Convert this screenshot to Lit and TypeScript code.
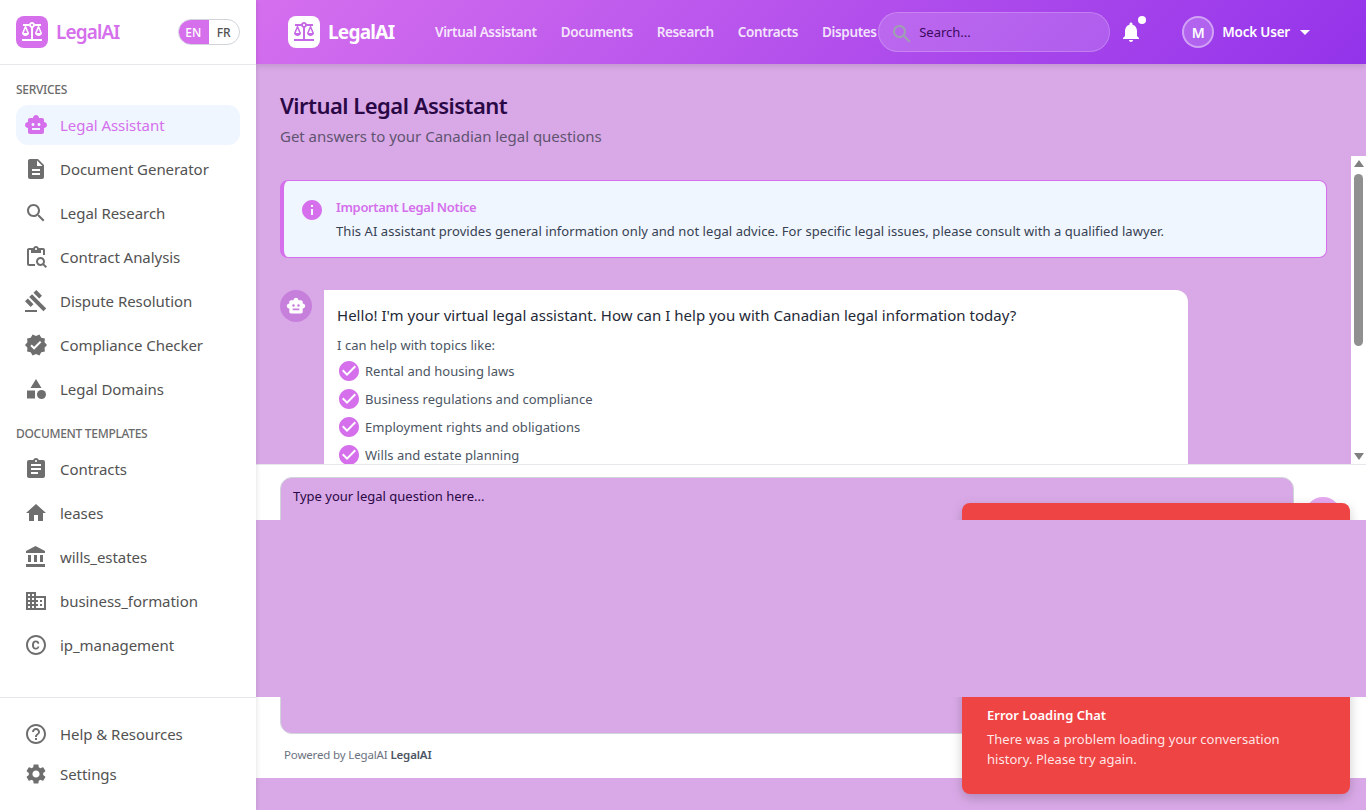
import { LitElement, html, css, svg } from "lit";
import { customElement } from "lit/decorators.js";

const P: Record<string, any> = {
  toy: svg`<path d="M20 9V7c0-1.1-.9-2-2-2h-3c0-1.66-1.34-3-3-3S9 3.34 9 5H6c-1.1 0-2 .9-2 2v2c-1.66 0-3 1.34-3 3s1.34 3 3 3v4c0 1.1.9 2 2 2h12c1.1 0 2-.9 2-2v-4c1.66 0 3-1.34 3-3s-1.34-3-3-3zM7.5 11.5c0-.83.67-1.5 1.5-1.5s1.5.67 1.5 1.5S9.83 13 9 13s-1.5-.67-1.5-1.5zM16 17H8v-2h8v2zm-1-4c-.83 0-1.5-.67-1.5-1.5S14.17 10 15 10s1.5.67 1.5 1.5S15.83 13 15 13z"/>`,
  doc: svg`<path d="M14 2H6c-1.1 0-1.99.9-1.99 2L4 20c0 1.1.89 2 1.99 2H18c1.1 0 2-.9 2-2V8l-6-6zm2 16H8v-2h8v2zm0-4H8v-2h8v2zm-3-5V3.5L18.5 9H13z"/>`,
  search: svg`<path d="M15.5 14h-.79l-.28-.27C15.41 12.59 16 11.11 16 9.5 16 5.91 13.09 3 9.5 3S3 5.91 3 9.5 5.91 16 9.5 16c1.61 0 3.09-.59 4.23-1.57l.27.28v.79l5 4.99L20.49 19l-4.99-5zm-6 0C7.01 14 5 11.99 5 9.5S7.01 5 9.5 5 14 7.01 14 9.5 11.99 14 9.5 14z"/>`,
  paste: svg`<path d="M5 5h2v3h10V5h2v5h2V5c0-1.1-.9-2-2-2h-4.18C14.4 1.84 13.3 1 12 1s-2.4.84-2.82 2H5c-1.1 0-2 .9-2 2v14c0 1.1.9 2 2 2h6v-2H5V5zm7-2c.55 0 1 .45 1 1s-.45 1-1 1-1-.45-1-1 .45-1 1-1z"/><path d="M20.3 18.9c.4-.7.7-1.5.7-2.4 0-2.5-2-4.5-4.5-4.5S12 14 12 16.5s2 4.5 4.5 4.5c.9 0 1.7-.3 2.4-.7l2.7 2.7 1.4-1.4-2.7-2.7zm-3.8.1c-1.4 0-2.5-1.1-2.5-2.5s1.1-2.5 2.5-2.5 2.5 1.1 2.5 2.5-1.1 2.5-2.5 2.5z"/>`,
  gavel: svg`<path d="M1 21h12v2H1v-2zM5.24 8.07l2.83-2.83 14.14 14.14-2.83 2.83L5.24 8.07zM12.32 1l5.66 5.66-2.83 2.83-5.66-5.66L12.32 1zM3.83 9.48l5.66 5.66-2.83 2.83L1 12.31l2.83-2.83z"/>`,
  verified: svg`<path d="M23 12l-2.44-2.79.34-3.69-3.61-.82-1.89-3.2L12 2.96 8.6 1.5 6.71 4.69 3.1 5.5l.34 3.7L1 12l2.44 2.79-.34 3.7 3.61.82L8.6 22.5l3.4-1.47 3.4 1.46 1.89-3.19 3.61-.82-.34-3.69L23 12zm-12.91 4.72l-3.8-3.81 1.48-1.48 2.32 2.33 5.85-5.87 1.48 1.48-7.33 7.35z"/>`,
  category: svg`<path d="M12 2l-5.5 9h11z"/><circle cx="17.5" cy="17.5" r="4.5"/><path d="M3 13.5h8v8H3z"/>`,
  assignment: svg`<path d="M19 3h-4.18C14.4 1.84 13.3 1 12 1c-1.3 0-2.4.84-2.82 2H5c-1.1 0-2 .9-2 2v14c0 1.1.9 2 2 2h14c1.1 0 2-.9 2-2V5c0-1.1-.9-2-2-2zm-7 0c.55 0 1 .45 1 1s-.45 1-1 1-1-.45-1-1 .45-1 1-1zm2 14H7v-2h7v2zm3-4H7v-2h10v2zm0-4H7V7h10v2z"/>`,
  home: svg`<path d="M10 20v-6h4v6h5v-8h3L12 3 2 12h3v8z"/>`,
  bank: svg`<path d="M4 10v7h3v-7H4zm6 0v7h3v-7h-3zM2 22h19v-3H2v3zm14-12v7h3v-7h-3zm-4.5-9L2 6v2h19V6l-9.5-5z"/>`,
  domain: svg`<path d="M12 7V3H2v18h20V7H12zM6 19H4v-2h2v2zm0-4H4v-2h2v2zm0-4H4V9h2v2zm0-4H4V5h2v2zm4 12H8v-2h2v2zm0-4H8v-2h2v2zm0-4H8V9h2v2zm0-4H8V5h2v2zm10 12h-8v-2h2v-2h-2v-2h2v-2h-2V9h8v10zm-2-8h-2v2h2v-2zm0 4h-2v2h2v-2z"/>`,
  copyright: svg`<path d="M11.88 9.14c1.28.06 1.61 1.15 1.63 1.66h1.79c-.08-1.98-1.49-3.19-3.45-3.19C9.64 7.61 8 9 8 12.14c0 1.94.93 4.24 3.84 4.24 2.22 0 3.41-1.65 3.44-2.95h-1.79c-.03.59-.45 1.38-1.63 1.44-1.32-.04-1.86-1.07-1.86-2.73 0-2.87 1.27-2.98 1.88-3zM12 2C6.48 2 2 6.48 2 12s4.48 10 10 10 10-4.48 10-10S17.52 2 12 2zm0 18c-4.41 0-8-3.59-8-8s3.59-8 8-8 8 3.59 8 8-3.59 8-8 8z"/>`,
  help: svg`<path d="M11 18h2v-2h-2v2zm1-16C6.48 2 2 6.48 2 12s4.48 10 10 10 10-4.48 10-10S17.52 2 12 2zm0 18c-4.41 0-8-3.59-8-8s3.59-8 8-8 8 3.59 8 8-3.59 8-8 8zm0-14c-2.21 0-4 1.79-4 4h2c0-1.1.9-2 2-2s2 .9 2 2c0 2-3 1.75-3 5h2c0-2.25 3-2.5 3-5 0-2.21-1.79-4-4-4z"/>`,
  settings: svg`<path d="M19.14 12.94c.04-.3.06-.61.06-.94 0-.32-.02-.64-.07-.94l2.03-1.58c.18-.14.23-.41.12-.61l-1.92-3.32c-.12-.22-.37-.29-.59-.22l-2.39.96c-.5-.38-1.03-.7-1.62-.94l-.36-2.54c-.04-.24-.24-.41-.48-.41h-3.84c-.24 0-.43.17-.47.41l-.36 2.54c-.59.24-1.13.57-1.62.94l-2.39-.96c-.22-.08-.47 0-.59.22L2.74 8.87c-.12.21-.08.47.12.61l2.03 1.58c-.05.3-.09.63-.09.94s.02.64.07.94l-2.03 1.58c-.18.14-.23.41-.12.61l1.92 3.32c.12.22.37.29.59.22l2.39-.96c.5.38 1.03.7 1.62.94l.36 2.54c.05.24.24.41.48.41h3.84c.24 0 .44-.17.47-.41l.36-2.54c.59-.24 1.13-.56 1.62-.94l2.39.96c.22.08.47 0 .59-.22l1.92-3.32c.12-.22.07-.47-.12-.61l-2.01-1.58zM12 15.6c-1.98 0-3.6-1.62-3.6-3.6s1.62-3.6 3.6-3.6 3.6 1.62 3.6 3.6-1.62 3.6-3.6 3.6z"/>`,
  balance: svg`<path d="M13 7.83c.85-.3 1.53-.98 1.83-1.83H18l-3 7c0 1.66 1.57 3 3.5 3s3.5-1.34 3.5-3l-3-7h2V4h-6.17c-.41-1.17-1.52-2-2.83-2s-2.42.83-2.83 2H3v2h2l-3 7c0 1.66 1.57 3 3.5 3S9 14.66 9 13L6 6h3.17c.3.85.98 1.53 1.83 1.83V19H2v2h20v-2h-9V7.83zM20.37 13h-3.74l1.87-4.36L20.37 13zm-13 0H3.63L5.5 8.64 7.37 13zM12 6c-.55 0-1-.45-1-1 0-.55.45-1 1-1s1 .45 1 1c0 .55-.45 1-1 1z"/>`,
  info: svg`<path d="M12 2C6.48 2 2 6.48 2 12s4.48 10 10 10 10-4.48 10-10S17.52 2 12 2zm1 15h-2v-6h2v6zm0-8h-2V7h2v2z"/>`,
  check: svg`<path d="M12 2C6.47 2 2 6.47 2 12s4.47 10 10 10 10-4.47 10-10S17.53 2 12 2zm-2 15l-5-5 1.41-1.41L10 14.17l7.59-7.59L19 8l-9 9z"/>`,
  bell: svg`<path d="M12 22c1.1 0 2-.9 2-2h-4c0 1.1.89 2 2 2zm6-6v-5c0-3.07-1.64-5.64-4.5-6.32V4c0-.83-.67-1.5-1.5-1.5s-1.5.67-1.5 1.5v.68C7.63 5.36 6 7.92 6 11v5l-2 2v1h16v-1l-2-2z"/>`,
  caret: svg`<path d="M7 10l5 5 5-5z"/>`,
};
const icon = (n: string, cls = "") => html`<svg class="ic ${cls}" viewBox="0 0 24 24" fill="currentColor">${P[n]}</svg>`;

const services = [["toy", "Legal Assistant"], ["doc", "Document Generator"], ["search", "Legal Research"], ["paste", "Contract Analysis"], ["gavel", "Dispute Resolution"], ["verified", "Compliance Checker"], ["category", "Legal Domains"]];
const templates = [["assignment", "Contracts"], ["home", "leases"], ["bank", "wills_estates"], ["domain", "business_formation"], ["copyright", "ip_management"]];
const footer = [["help", "Help & Resources"], ["settings", "Settings"]];
const topNav = ["Virtual Assistant", "Documents", "Research", "Contracts", "Disputes"];
const topics = ["Rental and housing laws", "Business regulations and compliance", "Employment rights and obligations", "Wills and estate planning"];

@customElement("app-root")
export class AppRoot extends LitElement {
  static styles = css`
    :host { display: flex; width: 100%; height: 810px; overflow: hidden; position: relative; background: #d9a9e7; font-family: "Noto Sans", "Open Sans", sans-serif; color: #1f2937; }
    * { box-sizing: border-box; }
    .ic { display: block; width: 24px; height: 24px; flex: none; }
    .side { position: relative; z-index: 3; width: 256px; flex: none; height: 810px; background: #fff; display: flex; flex-direction: column; box-shadow: 1px 0 4px rgba(0,0,0,.1); }
    .brand { height: 65px; flex: none; border-bottom: 1px solid #e5e7eb; padding: 0 16px; display: flex; align-items: center; }
    .logo { width: 32px; height: 32px; border-radius: 8px; background: #d56fec; color: #fff; display: flex; align-items: center; justify-content: center; flex: none; }
    .brandname { margin-left: 8px; font-size: 19px; font-weight: 600; color: #d56fec; letter-spacing: -.88px; flex: 1; }
    .lang { display: flex; width: 62px; height: 26px; border: 1px solid #d1d5db; border-radius: 13px; overflow: hidden; font-size: 12px; font-weight: 500; }
    .lang span { flex: 1; display: flex; align-items: center; justify-content: center; color: #525252; }
    .lang .on { background: #d56fec; color: #fff; margin: -1px 0 -1px -1px; }
    .nav { flex: 1; padding: 17px 16px 0; }
    .sec { height: 16px; margin: 0 0 7px; font-size: 12px; line-height: 16px; font-weight: 500; color: #6b6b6b; letter-spacing: -.3px; }
    .sec.second { margin-top: 17px; }
    .item { height: 40px; margin-bottom: 4px; border-radius: 12px; padding: 0 8px; display: flex; align-items: center; gap: 12px; font-size: 15px; letter-spacing: -.05px; color: #525252; }
    .item .ic { color: #6e6e6e; }
    .item.on { background: #eff6ff; color: #d56fec; }
    .item.on .ic { color: #d56fec; }
    .foot { border-top: 1px solid #e5e7eb; padding: 16px; flex: none; }
    .foot .item { margin: 0; }
    .main { flex: 1; min-width: 0; display: flex; flex-direction: column; position: relative; }
    .top { height: 64px; flex: none; display: flex; align-items: center; padding: 0 49px 0 32px; color: #fff; position: relative; z-index: 1; background: linear-gradient(135deg, #d56fee 0%, #9333ea 100%); box-shadow: 0 2px 6px rgba(0,0,0,.12); }
    .logo.w { background: #fff; color: #c568e6; }
    .tname { margin-left: 8px; font-size: 19px; font-weight: 700; letter-spacing: -.75px; flex: none; width: 67px; }
    .links { flex: 1; min-width: 0; display: flex; gap: 24px; margin-left: 40px; white-space: nowrap; font-size: 13.5px; font-weight: 600; color: rgba(255,255,255,.85); letter-spacing: -.36px; }
    .sbox { width: 232px; height: 40px; flex: none; border-radius: 20px; background: rgba(255,255,255,.15); border: 1px solid rgba(255,255,255,.2); display: flex; align-items: center; padding-left: 11px; gap: 5px; font-size: 13px; color: #3b0a5e; }
    .sbox .ic { color: #9ca3af; margin-top: 4px; }
    .bell { margin-left: 9px; position: relative; width: 24px; height: 24px; flex: none; }
    .dot { position: absolute; top: -4px; right: -3px; width: 8px; height: 8px; border-radius: 50%; background: #fff; }
    .user { margin-left: 39px; display: flex; align-items: center; font-size: 13.5px; font-weight: 600; letter-spacing: -.2px; flex: none; }
    .avatar { width: 32px; height: 32px; border-radius: 50%; background: rgba(255,255,255,.2); border: 2px solid rgba(255,255,255,.4); display: flex; align-items: center; justify-content: center; font-size: 14px; margin-right: 8px; }
    .user .ic { margin-left: 3px; }
    .head { height: 92px; flex: none; padding: 23px 24px 0; }
    h1 { margin: 0 0 1px; font-size: 22px; line-height: 36px; font-weight: 600; color: #2a0845; letter-spacing: -.52px; }
    .sub { margin: 0; font-size: 15px; line-height: 24px; letter-spacing: -.02px; color: #5f5470; }
    .chat { height: 308px; flex: none; display: flex; }
    .scrollarea { flex: 1; min-width: 0; overflow: hidden; padding: 24px 24px 0; }
    .notice { height: 78px; border: 1px solid #d56fec; border-left-width: 4px; border-radius: 8px; background: #eff6ff; padding: 0 16px; display: flex; align-items: center; gap: 12px; margin-bottom: 32px; }
    .notice .ic { color: #d56fec; margin-top: -18px; }
    .ntitle { font-size: 13px; line-height: 20px; font-weight: 600; letter-spacing: -.35px; color: #d56fec; }
    .nbody { font-size: 13px; line-height: 20px; letter-spacing: .06px; color: #374151; margin-top: 4px; }
    .msg { display: flex; gap: 12px; }
    .bot { width: 32px; height: 32px; border-radius: 50%; background: #c77fdc; color: #fff; display: flex; align-items: center; justify-content: center; flex: none; }
    .bot .ic { width: 20px; height: 20px; }
    .bubble { width: 864px; height: 240px; background: #fff; border-radius: 0 12px 12px 12px; padding: 12px 13px; box-shadow: 0 1px 2px rgba(0,0,0,.05); }
    .hello { font-size: 15px; line-height: 26px; letter-spacing: .02px; color: #1f2937; }
    .can { font-size: 13px; line-height: 20px; letter-spacing: .05px; color: #4b5563; margin-top: 7px; }
    .li { display: flex; align-items: center; gap: 4px; height: 24px; margin-top: 4px; font-size: 13px; letter-spacing: .03px; color: #4b5563; }
    .li .ic { color: #d56fec; }
    .sbar { width: 15px; flex: none; background: #fff; position: relative; display: flex; flex-direction: column; align-items: center; justify-content: space-between; padding: 4px 0; }
    .arrow { width: 0; height: 0; border-left: 5px solid transparent; border-right: 5px solid transparent; }
    .arrow.up { border-bottom: 7px solid #808080; }
    .arrow.down { border-top: 7px solid #808080; }
    .thumb { position: absolute; top: 18px; left: 3px; width: 9px; height: 172px; background: #909090; border-radius: 5px; }
    .compose { height: 314px; flex: none; background: #fff; border-top: 1px solid #e5e7eb; padding: 12px 25px 0 24px; position: relative; }
    .row { display: flex; gap: 11px; }
    .ta { flex: 1; height: 257px; background: #d9a9e7; border: 1px solid #d1d5db; border-radius: 12px; padding: 8px 12px; font-size: 13px; line-height: 20px; color: #2a0845; }
    .send { width: 36px; height: 36px; border-radius: 50%; background: #e6a8f0; margin-top: 20px; flex: none; }
    .power { margin: 13px 0 0 4px; font-size: 11.5px; line-height: 16px; letter-spacing: -.15px; color: #6b7280; }
    .power b { font-weight: 600; color: #4b5563; }
    .toast { position: absolute; left: 706px; top: 503px; width: 388px; height: 291px; z-index: 2; background: #ef4444; border-radius: 8px; box-shadow: 0 4px 12px rgba(0,0,0,.2); color: #fff; display: flex; flex-direction: column; justify-content: flex-end; padding: 0 24px 25px 25px; }
    .ttitle { font-size: 13px; line-height: 20px; font-weight: 600; }
    .tbody { font-size: 13px; line-height: 20px; letter-spacing: .04px; color: rgba(255,255,255,.88); margin-top: 4px; width: 320px; }
    .band { position: absolute; left: 0; right: 0; top: 520px; height: 177px; z-index: 2; background: #d9a9e7; }
  `;

  render() {
    const row = ([i, t]: string[], on = false) => html`<div class="item ${on ? "on" : ""}">${icon(i)}<span>${t}</span></div>`;
    return html`
      <aside class="side">
        <div class="brand">
          <div class="logo">${icon("balance")}</div>
          <div class="brandname">LegalAI</div>
          <div class="lang"><span class="on">EN</span><span>FR</span></div>
        </div>
        <div class="nav">
          <div class="sec">SERVICES</div>
          ${services.map((s, i) => row(s, i === 0))}
          <div class="sec second">DOCUMENT TEMPLATES</div>
          ${templates.map((s) => row(s))}
        </div>
        <div class="foot">${footer.map((s) => row(s))}</div>
      </aside>
      <div class="main">
        <header class="top">
          <div class="logo w">${icon("balance")}</div>
          <div class="tname">LegalAI</div>
          <nav class="links">${topNav.map((t) => html`<span>${t}</span>`)}</nav>
          <div class="sbox">${icon("search")}<span>Search...</span></div>
          <div class="bell">${icon("bell")}<span class="dot"></span></div>
          <div class="user"><div class="avatar">M</div>Mock User ${icon("caret")}</div>
        </header>
        <div class="head">
          <h1>Virtual Legal Assistant</h1>
          <p class="sub">Get answers to your Canadian legal questions</p>
        </div>
        <div class="chat">
          <div class="scrollarea">
            <div class="notice">
              ${icon("info")}
              <div>
                <div class="ntitle">Important Legal Notice</div>
                <div class="nbody">This AI assistant provides general information only and not legal advice. For specific legal issues, please consult with a qualified lawyer.</div>
              </div>
            </div>
            <div class="msg">
              <div class="bot">${icon("toy")}</div>
              <div class="bubble">
                <div class="hello">Hello! I'm your virtual legal assistant. How can I help you with Canadian legal information today?</div>
                <div class="can">I can help with topics like:</div>
                ${topics.map((t) => html`<div class="li">${icon("check")}<span>${t}</span></div>`)}
              </div>
            </div>
          </div>
          <div class="sbar"><span class="arrow up"></span><span class="thumb"></span><span class="arrow down"></span></div>
        </div>
        <div class="compose">
          <div class="row">
            <div class="ta">Type your legal question here...</div>
            <div class="send"></div>
          </div>
          <div class="power">Powered by LegalAI <b>LegalAI</b></div>
        </div>
        <div class="toast">
          <div class="ttitle">Error Loading Chat</div>
          <div class="tbody">There was a problem loading your conversation history. Please try again.</div>
        </div>
        <div class="band"></div>
      </div>
    `;
  }
}
